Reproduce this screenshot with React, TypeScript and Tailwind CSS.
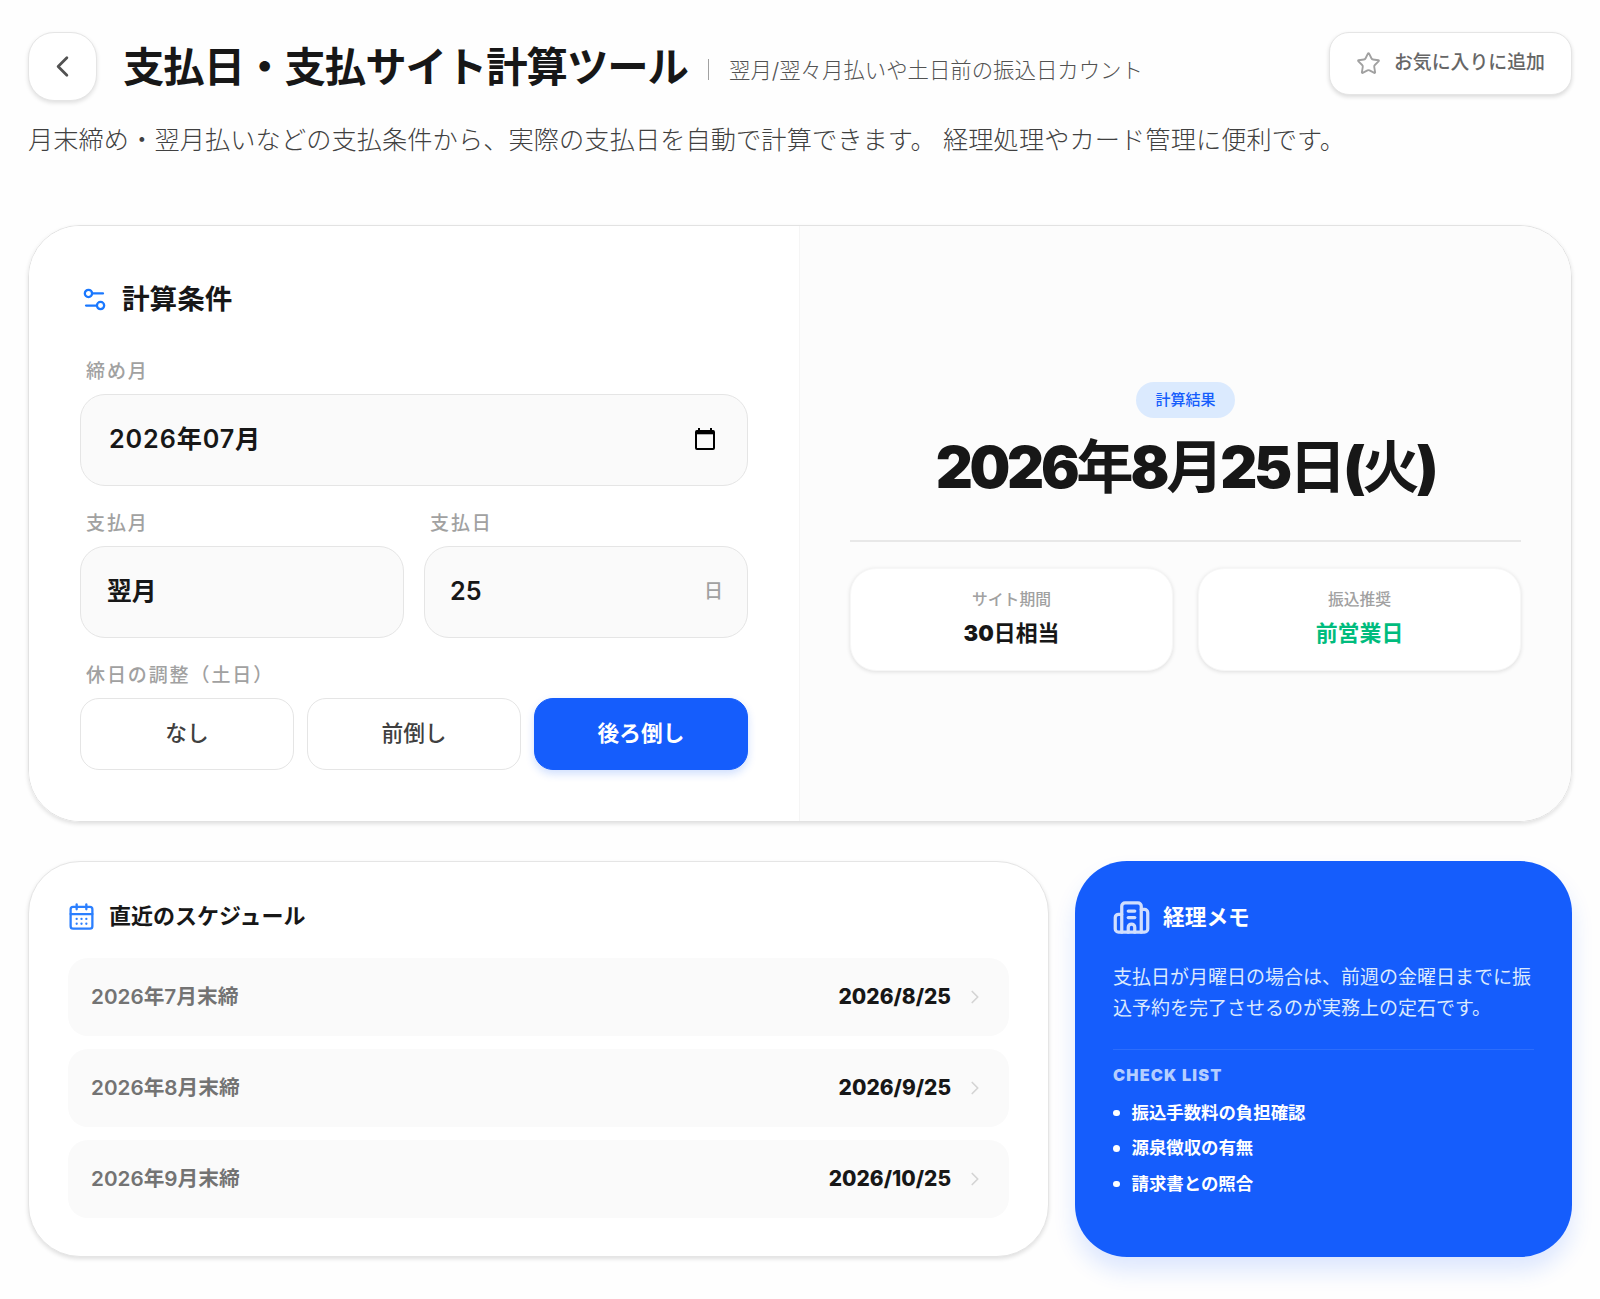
import { useState } from "react";
import type { ReactNode } from "react";
import {
  Building2,
  CalendarDays,
  ChevronLeft,
  ChevronRight,
  Settings2,
  Star,
} from "lucide-react";
import { clsx } from "clsx";

type Adjust = "none" | "before" | "after";

const ADJUST_OPTIONS: { value: Adjust; label: string }[] = [
  { value: "none", label: "なし" },
  { value: "before", label: "前倒し" },
  { value: "after", label: "後ろ倒し" },
];

const SCHEDULES = [
  { closing: "2026年7月末締", payment: "2026/8/25" },
  { closing: "2026年8月末締", payment: "2026/9/25" },
  { closing: "2026年9月末締", payment: "2026/10/25" },
];

const CHECK_LIST = ["振込手数料の負担確認", "源泉徴収の有無", "請求書との照合"];

function FieldLabel({ children }: { children: ReactNode }) {
  return (
    <span className="block h-[29px] mb-[8px] pl-[6px] text-[19px] leading-[29px] font-medium tracking-[0.1em] text-[#a1a1a1]">
      {children}
    </span>
  );
}

function PickerIcon() {
  return (
    <svg className="-mt-[2px]" width="20" height="22" viewBox="0 0 20 22" fill="none">
      <path d="M4 0v3M16 0v3" stroke="#000" strokeWidth="2" />
      <rect x="1" y="3" width="18" height="18" rx="1" stroke="#000" strokeWidth="2" />
      <path d="M1 4.5h18" stroke="#000" strokeWidth="3.6" />
    </svg>
  );
}

function Header() {
  return (
    <header>
      <div className="flex h-[69px] items-start justify-between">
        <div className="flex h-full items-center">
          <button className="flex size-[69px] items-center justify-center rounded-[26px] border border-[#e5e5e5] bg-white shadow-[0_2px_4px_rgba(0,0,0,0.12)]">
            <ChevronLeft className="size-[35px] text-[#525252]" strokeWidth={1.9} />
          </button>
          <h1 className="ml-[26px] text-[41.4px] leading-[60px] font-bold tracking-[-0.025em] text-[#171717]">
            支払日・支払サイト計算ツール
          </h1>
          <p className="mt-[6px] ml-[20px] flex items-center text-[21.4px] leading-[30px] font-light text-[#525252]">
            <span className="mr-[20px] h-[21px] w-px bg-[#a1a1a1]" />
            翌月/翌々月払いや土日前の振込日カウント
          </p>
        </div>
        <button className="flex h-[63px] items-center gap-[13px] rounded-[20px] border border-[#e5e5e5] bg-white px-[26px] text-[18.9px] font-medium text-[#666] shadow-[0_2px_4px_rgba(0,0,0,0.14)]">
          <Star className="size-[25px] text-[#a1a1a1]" strokeWidth={1.8} />
          お気に入りに追加
        </button>
      </div>
      <p className="mt-[20px] text-[25.2px] leading-[38px] font-light tracking-[0.004em] text-[#404040]">
        月末締め・翌月払いなどの支払条件から、実際の支払日を自動で計算できます。 経理処理やカード管理に便利です。
      </p>
    </header>
  );
}

function ConditionPanel() {
  const [adjust, setAdjust] = useState<Adjust>("after");
  const [day, setDay] = useState("25");

  return (
    <div className="border-r border-[#f5f5f5] bg-white p-[51px]">
      <h2 className="flex h-[45px] items-center gap-[13px] text-[27.6px] font-bold text-[#171717]">
        <Settings2 className="size-[29px] text-[#1a78ff]" strokeWidth={1.9} />
        計算条件
      </h2>

      <div className="mt-[35px]">
        <FieldLabel>締め月</FieldLabel>
        <div className="flex h-[92px] items-center justify-between rounded-[25px] border border-[#e5e5e5] bg-[#fafafa] pr-[32px] pl-[28px]">
          <span className="text-[25.2px] font-semibold tracking-[0.035em] text-[#171717]">
            2026年07月
          </span>
          <PickerIcon />
        </div>
      </div>

      <div className="mt-[23px] grid grid-cols-2 gap-[20px]">
        <div>
          <FieldLabel>支払月</FieldLabel>
          <div className="flex h-[92px] items-center rounded-[25px] border border-[#e5e5e5] bg-[#fafafa] px-[26px] text-[24.8px] font-bold text-[#171717]">
            翌月
          </div>
        </div>
        <div>
          <FieldLabel>支払日</FieldLabel>
          <div className="flex h-[92px] items-center rounded-[25px] border border-[#e5e5e5] bg-[#fafafa] pr-[24px] pl-[25px]">
            <input
              className="min-w-0 flex-1 bg-transparent text-[25.2px] font-semibold text-[#171717] outline-none"
              value={day}
              onChange={(e) => setDay(e.target.value)}
            />
            <span className="text-[19px] font-medium text-[#a1a1a1]">日</span>
          </div>
        </div>
      </div>

      <div className="mt-[23px]">
        <FieldLabel>休日の調整（土日）</FieldLabel>
        <div className="grid grid-cols-3 gap-[13px]">
          {ADJUST_OPTIONS.map((option) => (
            <button
              key={option.value}
              onClick={() => setAdjust(option.value)}
              className={clsx(
                "h-[72px] rounded-[19px] border pb-[1px] text-[21.7px]",
                adjust === option.value
                  ? "border-[#155dfc] bg-[#155dfc] font-bold text-white shadow-[0_4px_8px_rgba(21,93,252,0.2)]"
                  : "border-[#e5e5e5] bg-white font-medium text-[#404040]"
              )}
            >
              {option.label}
            </button>
          ))}
        </div>
      </div>
    </div>
  );
}

function ResultPanel() {
  return (
    <div className="flex flex-col items-center bg-[#fcfcfc] px-[50px] pt-[156px]">
      <span className="flex h-[36px] items-center rounded-full bg-[#dbeafe] px-[19px] text-[15px] font-medium text-[#155dfc]">
        計算結果
      </span>
      <p className="mt-[13px] text-[57.4px] leading-[72px] font-black tracking-[-0.057em] whitespace-nowrap text-[#171717]">
        2026<span className="font-bold">年</span>8<span className="font-bold">月</span>25
        <span className="font-bold">日</span>(<span className="font-bold">火</span>)
      </p>
      <div className="mt-[37px] grid w-full grid-cols-2 gap-[25px] border-t-2 border-[#e8e8e8] pt-[26px]">
        <div className="flex h-[103px] flex-col items-center rounded-[26px] border border-[#f7f7f7] bg-white pt-[19px] shadow-[0_1px_4px_rgba(0,0,0,0.12)]">
          <span className="text-[15.8px] leading-[24px] font-medium text-[#a1a1a1]">サイト期間</span>
          <span className="mt-[5px] text-[21.9px] leading-[32px] font-black text-[#171717]">
            30<span className="font-bold">日相当</span>
          </span>
        </div>
        <div className="flex h-[103px] flex-col items-center rounded-[26px] border border-[#f7f7f7] bg-white pt-[19px] shadow-[0_1px_4px_rgba(0,0,0,0.12)]">
          <span className="text-[15.8px] leading-[24px] font-medium text-[#a1a1a1]">振込推奨</span>
          <span className="mt-[5px] text-[21.9px] leading-[32px] font-bold text-[#00bc7d]">
            前営業日
          </span>
        </div>
      </div>
    </div>
  );
}

function ScheduleCard() {
  return (
    <section className="rounded-[52px] border border-[#e5e5e5] bg-white px-[39px] pt-[37px] shadow-[0_2px_4px_rgba(0,0,0,0.12)]">
      <h3 className="flex h-[34px] items-center gap-[13px] text-[22px] font-bold text-[#171717]">
        <CalendarDays className="-ml-px size-[29px] text-[#2b7fff]" strokeWidth={1.9} />
        直近のスケジュール
      </h3>
      <div className="mt-[25px] flex flex-col gap-[13px]">
        {SCHEDULES.map((item) => (
          <div
            key={item.closing}
            className="flex h-[78px] items-center justify-between rounded-[20px] bg-[#fafafa] px-[23px]"
          >
            <span className="text-[20.7px] font-semibold text-[#737373]">{item.closing}</span>
            <div className="flex items-center gap-[13px]">
              <span className="text-[20.9px] font-extrabold text-[#171717]">{item.payment}</span>
              <ChevronRight className="size-[22px] text-[#d4d4d4]" strokeWidth={1.9} />
            </div>
          </div>
        ))}
      </div>
    </section>
  );
}

function MemoCard() {
  return (
    <section className="rounded-[52px] bg-[#155dfc] px-[38px] pt-[37px] text-white shadow-[0_14px_22px_rgba(21,93,252,0.14)]">
      <h3 className="flex h-[39px] items-center gap-[12px] text-[21.7px] font-bold">
        <Building2 className="-ml-px size-[39px] opacity-80" strokeWidth={2} />
        経理メモ
      </h3>
      <p className="mt-[25px] text-[19px] leading-[31px] text-[#dbeafe]">
        支払日が月曜日の場合は、前週の金曜日までに振込予約を完了させるのが実務上の定石です。
      </p>
      <div className="mt-[25px] border-t border-white/10 pt-[13px]">
        <p className="text-[16.3px] leading-[24px] font-black tracking-[0.07em] text-[#b4ceff]">
          CHECK LIST
        </p>
        <ul className="mt-[8px]">
          {CHECK_LIST.map((item) => (
            <li
              key={item}
              className="flex h-[35.5px] items-center gap-[12px] text-[17.4px] font-bold"
            >
              <span className="size-[6.5px] rounded-full bg-white" />
              {item}
            </li>
          ))}
        </ul>
      </div>
    </section>
  );
}

export default function App() {
  return (
    <div
      lang="ja"
      className="h-[1299px] bg-[#fefefe] px-[28px] pt-[32px] font-['Inter','Noto_Sans_CJK_JP',sans-serif]"
    >
      <Header />
      <main className="mt-[66px]">
        <section className="grid h-[597px] grid-cols-2 overflow-hidden rounded-[52px] border border-[#e2e2e2] shadow-[0_2px_4px_rgba(0,0,0,0.12)]">
          <ConditionPanel />
          <ResultPanel />
        </section>
        <div className="mt-[39px] grid h-[396px] grid-cols-[1021px_1fr] gap-[26px]">
          <ScheduleCard />
          <MemoCard />
        </div>
      </main>
    </div>
  );
}
